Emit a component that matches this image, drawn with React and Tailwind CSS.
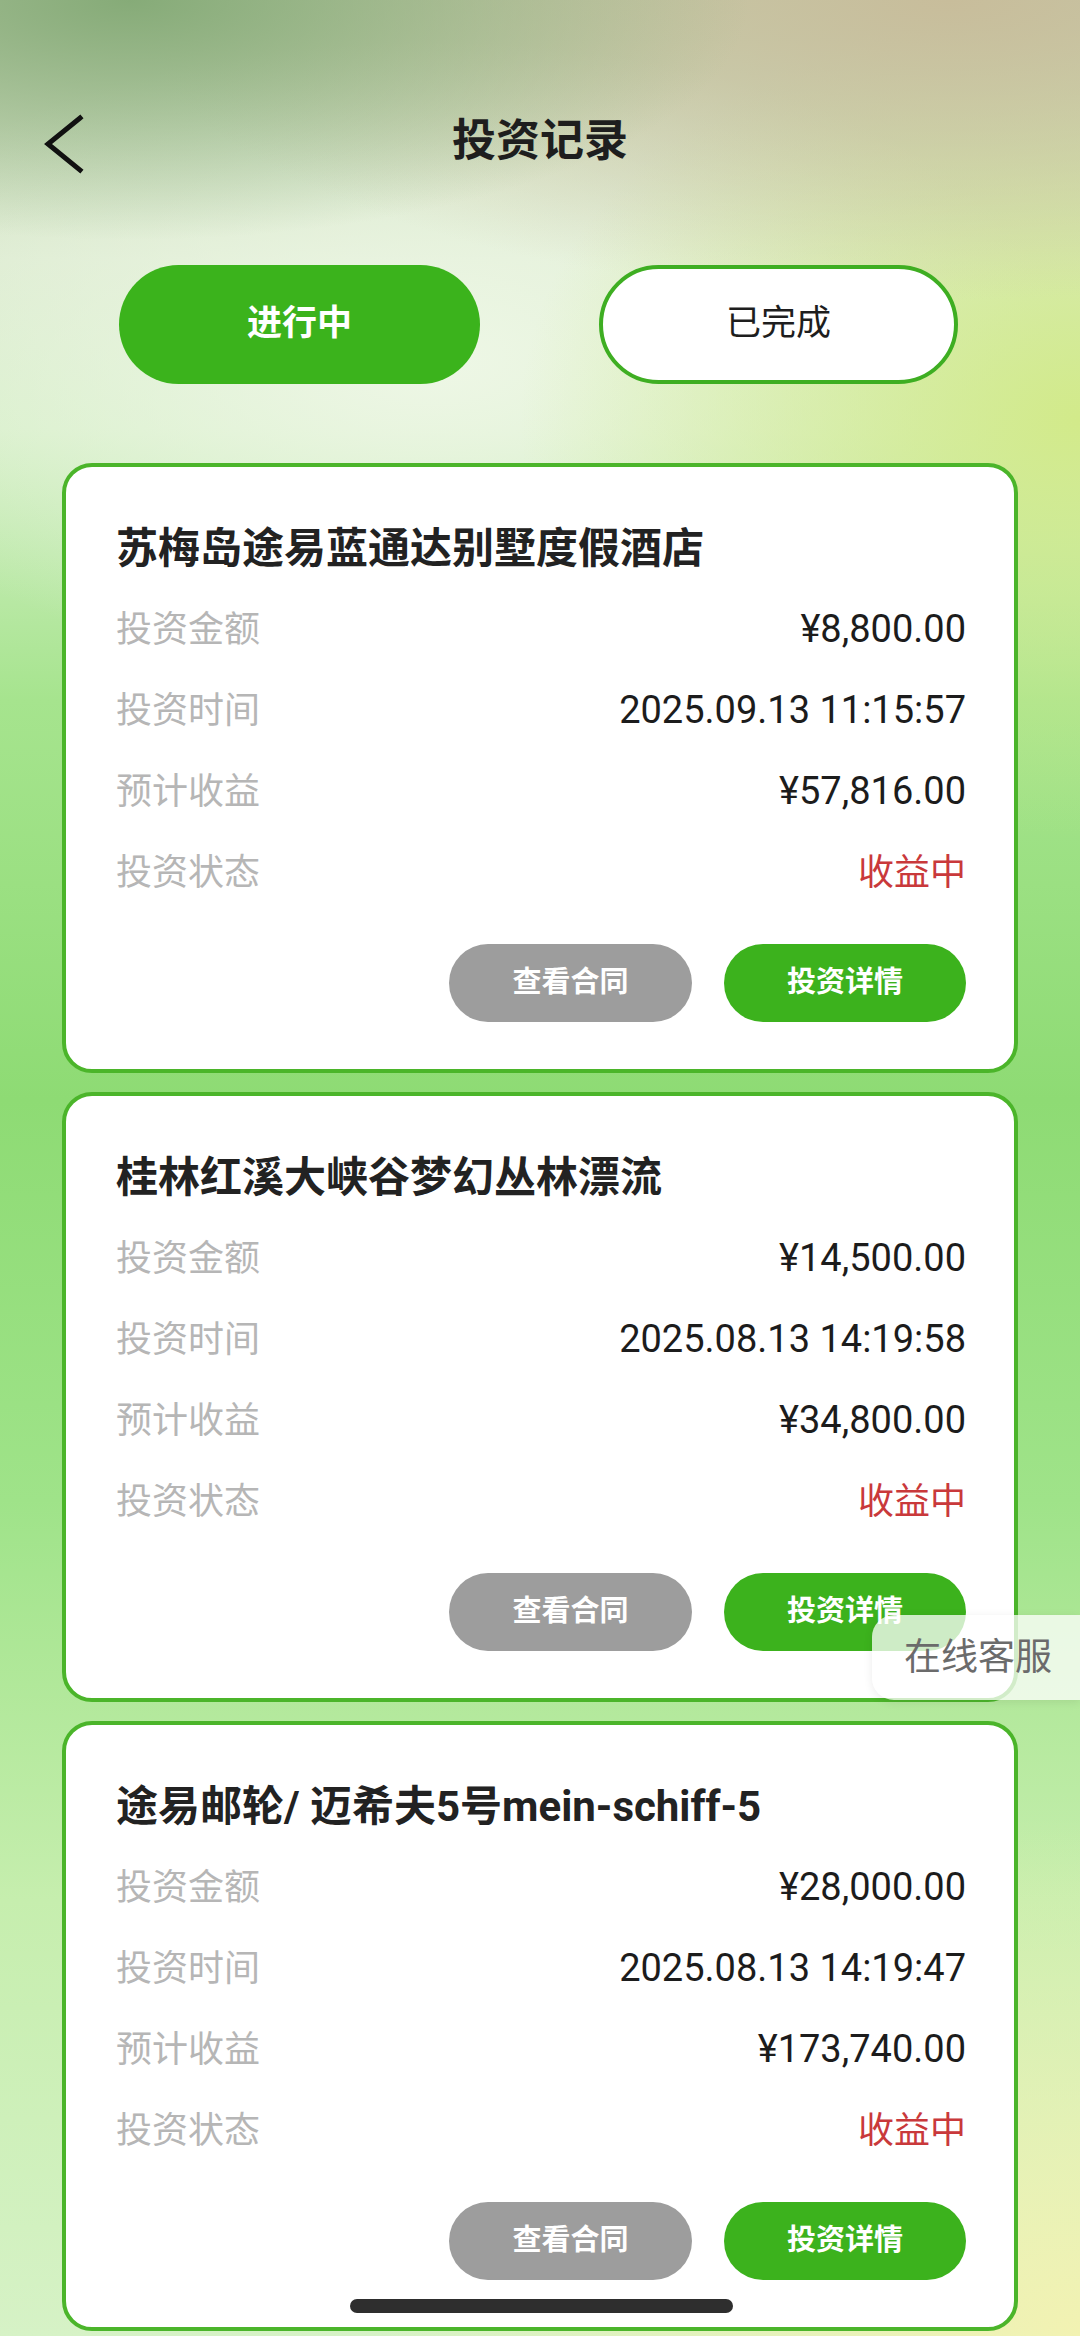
const records = [
  {
    name: "苏梅岛途易蓝通达别墅度假酒店",
    amount: "¥8,800.00",
    time: "2025.09.13 11:15:57",
    profit: "¥57,816.00",
    status: "收益中",
  },
  {
    name: "桂林红溪大峡谷梦幻丛林漂流",
    amount: "¥14,500.00",
    time: "2025.08.13 14:19:58",
    profit: "¥34,800.00",
    status: "收益中",
  },
  {
    name: "途易邮轮/ 迈希夫5号mein-schiff-5",
    amount: "¥28,000.00",
    time: "2025.08.13 14:19:47",
    profit: "¥173,740.00",
    status: "收益中",
  },
];

const font = "font-['Roboto','Noto_Sans_CJK_SC',sans-serif]";

function Row({ label, value, red }) {
  return (
    <div className="flex h-[81px] items-center justify-between">
      <span className="text-[36px] text-[#b6b6b6]">{label}</span>
      <span className={red ? "text-[36px] text-[#c9393b]" : "text-[38px] text-[#1c1c1c]"}>{value}</span>
    </div>
  );
}

function RecordCard({ item }) {
  return (
    <div className="rounded-[30px] border-[4px] border-[#4bb52a] bg-white pl-[50px] pr-[48px] pt-[52px] pb-[47px]">
      <div className="flex h-[60px] items-center text-[42px] font-bold text-[#222] leading-none">{item.name}</div>
      <div className="mt-[10px]">
        <Row label="投资金额" value={item.amount} />
        <Row label="投资时间" value={item.time} />
        <Row label="预计收益" value={item.profit} />
        <Row label="投资状态" value={item.status} red />
      </div>
      <div className="mt-[31px] flex justify-end gap-[32px]">
        <button className="flex h-[78px] w-[243px] items-center justify-center rounded-full bg-[#9d9d9d] text-[29px] font-bold text-white">
          查看合同
        </button>
        <button className="flex h-[78px] w-[242px] items-center justify-center rounded-full bg-[#3cb21d] text-[29px] font-bold text-white">
          投资详情
        </button>
      </div>
    </div>
  );
}

export default function App() {
  return (
    <div
      className={`relative min-h-[2336px] w-[1080px] overflow-hidden ${font} bg-[radial-gradient(620px_240px_at_12%_0%,#86ab78,transparent),radial-gradient(820px_300px_at_88%_0%,#c8bd9b,transparent),radial-gradient(560px_420px_at_100%_420px,#d2ea8a,transparent),radial-gradient(640px_320px_at_40%_360px,#eef7e6,transparent),radial-gradient(700px_520px_at_100%_100%,#f2f2b2,transparent),linear-gradient(180deg,#c4d2b2_0px,#dcebd0_260px,#d6efc8_430px,#a6e48e_700px,#8edb74_1100px,#9fe389_1500px,#c6eeae_1900px,#d6f2c6_2336px)]`}
    >
      {/* header */}
      <div className="h-[96px]" />
      <div className="relative flex h-[90px] items-center justify-center">
        <svg className="absolute left-[40px] top-[18px]" width="48" height="60" viewBox="0 0 48 60" fill="none">
          <polyline points="40,4 8,30 40,56" stroke="#111" strokeWidth="5" strokeLinecap="square" />
        </svg>
        <h1 className="text-[44px] font-bold text-[#1e1e1e]">投资记录</h1>
      </div>

      {/* tabs */}
      <div className="mt-[79px] flex justify-between pl-[119px] pr-[122px]">
        <button className="flex h-[119px] w-[361px] items-center justify-center rounded-full bg-[#3bb31c] text-[35px] font-bold text-white">
          进行中
        </button>
        <button className="flex h-[119px] w-[359px] items-center justify-center rounded-full border-[4px] border-[#3eae22] bg-white text-[35px] text-[#1e1e1e]">
          已完成
        </button>
      </div>

      {/* list */}
      <div className="mt-[79px] flex flex-col gap-[19px] px-[62px]">
        {records.map((r) => (
          <RecordCard key={r.name} item={r} />
        ))}
      </div>

      {/* floating service tab */}
      <div className="absolute right-0 top-[1615px] flex h-[85px] w-[208px] items-center rounded-l-[22px] bg-white/75 pl-[32px] text-[37px] text-[#6b6b6b] shadow-[0_2px_10px_rgba(0,0,0,0.08)]">
        在线客服
      </div>

      {/* home indicator */}
      <div className="absolute bottom-[23px] left-[350px] h-[14px] w-[383px] rounded-full bg-[#2e2e2e]" />
    </div>
  );
}
